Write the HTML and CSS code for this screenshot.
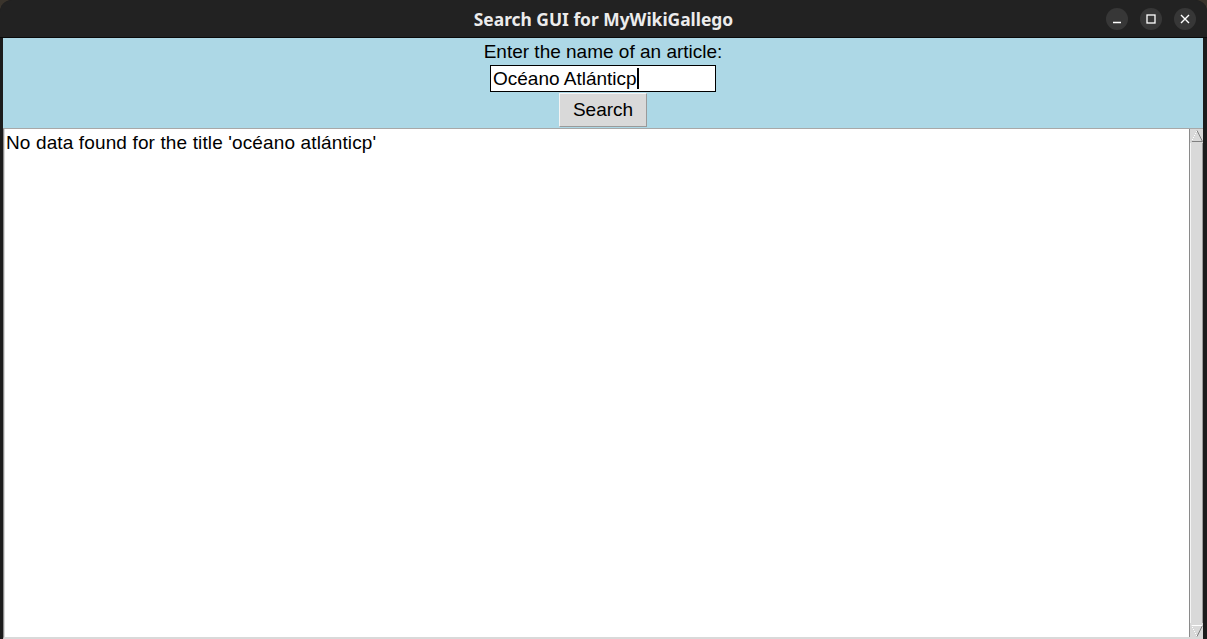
FILE: index.html
```html
<!DOCTYPE html>
<html>
<head>
<meta charset="utf-8">
<link rel="stylesheet" href="styles.css">
</head>
<body>
<div class="desktop">
  <div class="window">
    <div class="titlebar">
      <div class="title">Search GUI for MyWikiGallego</div>
      <div class="controls">
        <div class="ctl"><svg width="10" height="10" viewBox="0 0 10 10"><path d="M1 8.5H9" stroke="#fff" stroke-width="1.3"/></svg></div>
        <div class="ctl"><svg width="10" height="10" viewBox="0 0 10 10"><rect x="1" y="1" width="8" height="8" fill="none" stroke="#fff" stroke-width="1.3"/></svg></div>
        <div class="ctl"><svg width="10" height="10" viewBox="0 0 10 10"><path d="M1 1L9 9M9 1L1 9" stroke="#fff" stroke-width="1.4"/></svg></div>
      </div>
    </div>
    <div class="client">
      <div class="form">
        <div class="label">Enter the name of an article:</div>
        <div class="entry"><span>Océano Atlánticp</span><span class="caret"></span></div>
        <div class="button">Search</div>
      </div>
      <div class="textwrap">
        <div class="text">No data found for the title 'océano atlánticp'</div>
        <div class="scrollbar">
          <div class="arrow"><svg class="tri" width="12" height="12" viewBox="0 0 12 12"><path d="M6 0.5L11.5 11.5H0.5Z" fill="#d9d9d9" stroke="#808080"/><path d="M6 0.5L0.5 11.5" stroke="#ffffff"/></svg></div>
          <div class="trough"></div>
          <div class="arrow"><svg class="tri" width="12" height="12" viewBox="0 0 12 12"><path d="M0.5 0.5H11.5L6 11.5Z" fill="#d9d9d9" stroke="#808080"/><path d="M0.5 0.5H11.5M0.5 0.5L6 11.5" stroke="#ffffff"/></svg></div>
        </div>
      </div>
    </div>
  </div>
</div>
</body>
</html>
```

FILE: styles.css
```css
html, body {
  margin: 0;
  padding: 0;
  width: 1207px;
  height: 639px;
  overflow: hidden;
}
.desktop {
  width: 1207px;
  height: 639px;
  background: #3a342c;
}
.window {
  width: 1207px;
  height: 639px;
  background: #1c1c1c;
  border-radius: 12px 12px 0 0;
  display: flex;
  flex-direction: column;
  overflow: hidden;
}
.titlebar {
  height: 37px;
  flex: none;
  background: #222222;
  border-bottom: 1px solid #0a0a0a;
  position: relative;
  display: flex;
  align-items: center;
  justify-content: center;
}
.title {
  font-family: "Noto Sans", sans-serif;
  font-weight: bold;
  font-size: 17.4px;
  color: #ececec;
}
.controls {
  position: absolute;
  right: 11px;
  top: 8px;
  display: flex;
  gap: 12px;
}
.ctl {
  width: 22px;
  height: 22px;
  border-radius: 50%;
  background: #373737;
  display: flex;
  align-items: center;
  justify-content: center;
}
.client {
  flex: 1;
  display: flex;
  flex-direction: column;
  margin: 0 4px 0 3px;
  font-family: "Liberation Sans", Arial, sans-serif;
  font-size: 19px;
  color: #000;
}
.form {
  background: #add8e6;
  height: 90px;
  display: flex;
  flex-direction: column;
  align-items: center;
}
.label {
  height: 27px;
  line-height: 27px;
}
.entry {
  width: 222px;
  height: 25px;
  border: 1px solid #000;
  background: #fff;
  display: flex;
  align-items: center;
  padding-left: 2px;
}
.caret {
  width: 2px;
  height: 21px;
  background: #000;
}
.button {
  width: 86px;
  height: 32px;
  margin-top: 1px;
  background: #d9d9d9;
  border: 1px solid;
  border-color: #f4f4f4 #9a9a9a #9a9a9a #f4f4f4;
  display: flex;
  align-items: center;
  justify-content: center;
}
.textwrap {
  flex: 1;
  display: flex;
  background: #fff;
  border-top: 1px solid #a8a8a8;
  border-left: 1px solid #8a8a8a;
  border-bottom: 2px solid #d9d9d9;
}
.text {
  flex: 1;
  padding: 3px 0 0 1px;
  line-height: 22px;
  letter-spacing: 0.13px;
  border-left: 1px solid #d9d9d9;
}
.scrollbar {
  width: 13px;
  flex: none;
  display: flex;
  flex-direction: column;
  background: #d9d9d9;
  border-left: 1px solid #8a8a8a;
}
.arrow {
  height: 13px;
  flex: none;
  display: flex;
  align-items: center;
  justify-content: center;
}
.tri {
  display: block;
  flex: none;
}
.trough {
  flex: 1;
  border-left: 1px solid #f4f4f4;
  border-right: 1px solid #9a9a9a;
  margin: 1px 0;
}
```
